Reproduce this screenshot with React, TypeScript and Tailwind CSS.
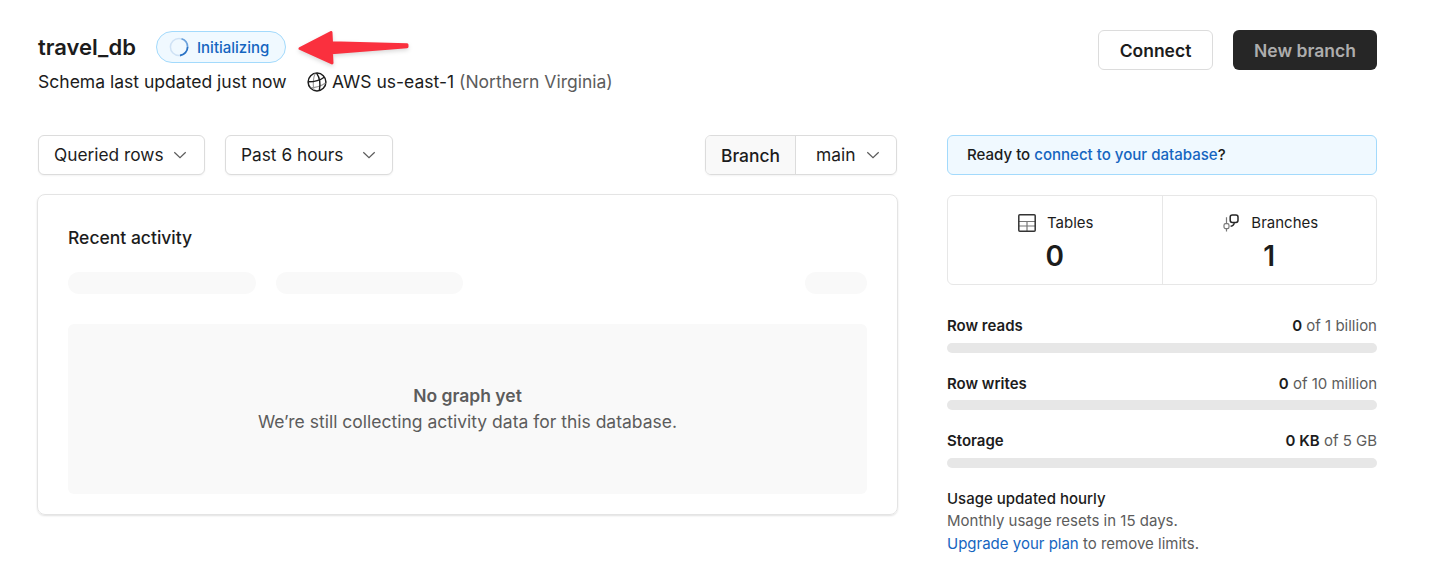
import type { ReactNode } from "react";

function Spinner() {
  return (
    <svg width="20" height="20" viewBox="0 0 20 20" fill="none" className="shrink-0">
      <circle cx="10" cy="10" r="8.6" stroke="#cfe2f5" strokeWidth="1.5" />
      <path d="M12.5 1.8A8.6 8.6 0 0 1 18.6 10" stroke="#6ba2dc" strokeWidth="1.6" />
      <path d="M18.6 10A8.6 8.6 0 0 1 11 18.5" stroke="#2a73c5" strokeWidth="1.8" />
    </svg>
  );
}

function Arrow() {
  return (
    <svg width="114" height="40" viewBox="0 0 114 40" className="shrink-0 overflow-visible drop-shadow-[0_2px_2px_rgba(0,0,0,0.15)]">
      <path
        d="M3 19.5L34 3.5L34.5 13.8L110 15.7V17.8L34.5 23.8L35 34Z"
        fill="#fa303e"
        stroke="#fa303e"
        strokeWidth="3"
        strokeLinejoin="round"
      />
    </svg>
  );
}

function Globe() {
  return (
    <svg width="20" height="20" viewBox="0 0 20 20" fill="none" className="shrink-0">
      <circle cx="10" cy="10" r="8.9" stroke="#1c1c1c" strokeWidth="1.5" />
      <path d="M8.2 1.4C6 6 5.8 11.5 6.8 18.2M3.6 15.8C8.5 15.7 14 14.2 18.5 11" stroke="#9a9a9a" strokeWidth="1.1" />
      <path d="M1.4 9.8C6.5 9.8 13 8.4 17.2 5.2" stroke="#1c1c1c" strokeWidth="1.4" />
      <path d="M9.6 1.2C12.6 5.6 13.6 12 12.4 18.4" stroke="#1c1c1c" strokeWidth="1.4" />
    </svg>
  );
}

function TableIcon() {
  return (
    <svg width="18" height="18" viewBox="0 0 18 18" fill="none">
      <path d="M1 7.5H17M1 12H17M9 7.5V17" stroke="#777" strokeWidth="1.2" />
      <rect x="0.8" y="0.8" width="16.4" height="16.4" rx="1" stroke="#333" strokeWidth="1.5" />
    </svg>
  );
}

function BranchIcon() {
  return (
    <svg width="18" height="18" viewBox="0 0 18 18" fill="none">
      <path d="M4.5 3.2V9.5M4.5 14.8V17.5" stroke="#777" strokeWidth="1.2" />
      <rect x="2" y="9.6" width="5" height="5" rx="1.6" stroke="#777" strokeWidth="1.2" />
      <rect x="8.2" y="1" width="7.8" height="7.4" rx="2.1" stroke="#262626" strokeWidth="1.5" />
      <path d="M12.2 8.6C12.2 10.8 11 12 8.6 12.3" stroke="#262626" strokeWidth="1.4" />
    </svg>
  );
}

function Chevron() {
  return (
    <svg width="14" height="8" viewBox="0 0 14 8" fill="none" className="shrink-0">
      <path d="M1.3 1.2L7 6.6L12.7 1.2" stroke="#5c5c5c" strokeWidth="1.2" />
    </svg>
  );
}

function Select({ label, className }: { label: string; className: string }) {
  return (
    <button className={`flex h-10 items-center justify-between rounded-md border border-[#dcdcdc] bg-white pl-[15px] shadow-[0_1px_2px_rgba(0,0,0,0.05)] ${className}`}>
      <span className="text-[17.3px] leading-6">{label}</span>
      <Chevron />
    </button>
  );
}

function Stat({ icon, label, value }: { icon: ReactNode; label: string; value: string }) {
  return (
    <div className="flex flex-1 flex-col items-center pt-[17px]">
      <div className="flex h-5 items-center gap-[11px] pl-[2px] text-[15px]">
        {icon}
        <span>{label}</span>
      </div>
      <div className="mt-[5px] text-[28px] leading-9 font-semibold">{value}</div>
    </div>
  );
}

function Usage({ label, used, limit, barGap }: { label: string; used: string; limit: string; barGap: string }) {
  return (
    <div>
      <div className="flex h-5 items-center justify-between text-[15px]">
        <span className="font-semibold">{label}</span>
        <span className="text-[#5c5c5c]">
          <span className="font-semibold text-[#1c1c1c]">{used}</span> {limit}
        </span>
      </div>
      <div className={`h-[10px] rounded-full bg-[#e7e7e7] ${barGap}`} />
    </div>
  );
}

export default function App() {
  return (
    <main className="h-[580px] w-[1429px] overflow-hidden bg-white pt-[30px] pr-[52px] pl-[38px] font-['Inter',sans-serif] text-[#1c1c1c]">
      <header className="flex h-[105px] items-start justify-between">
        <div>
          <div className="flex h-[34px] items-center">
            <h1 className="w-[118px] text-[22px] font-semibold">travel_db</h1>
            <div className="flex h-8 w-[130px] items-center gap-2 rounded-full border border-[#a3dafc] bg-[#f0f9ff] pl-3 text-[15px] font-medium text-[#1565c0]">
              <Spinner />
              <span className="pt-[2px]">Initializing</span>
            </div>
            <div className="ml-[11px] h-9">
              <Arrow />
            </div>
          </div>
          <div className="mt-[6px] flex h-6 items-center text-[17.5px]">
            <span className="w-[269px] text-[17.55px] whitespace-nowrap">Schema last updated just now</span>
            <Globe />
            <span className="ml-[5px] whitespace-nowrap">
              AWS us-east-1 <span className="text-[#5c5c5c]">(Northern Virginia)</span>
            </span>
          </div>
        </div>
        <div className="flex gap-5 text-[17.5px] font-semibold">
          <button className="h-10 w-[115px] rounded-md border border-[#dcdcdc] pt-[2px]">Connect</button>
          <button className="h-10 w-[144px] rounded-md bg-[#262626] pt-[2px] text-[#adadad]">New branch</button>
        </div>
      </header>

      <div className="flex justify-between">
        <section className="w-[859px]">
          <div className="flex h-10 gap-5">
            <Select label="Queried rows" className="w-[167px] pr-[17px]" />
            <Select label="Past 6 hours" className="w-[168px] pr-4" />
            <div className="ml-auto flex w-[192px] overflow-hidden rounded-md border border-[#dcdcdc] text-[17.4px] shadow-[0_1px_2px_rgba(0,0,0,0.05)]">
              <div className="flex w-[90px] items-center justify-center border-r border-[#dcdcdc] bg-[#f9f9f9] pt-[2px] font-medium">Branch</div>
              <button className="flex flex-1 items-center justify-between pr-4 pl-5">
                <span>main</span>
                <Chevron />
              </button>
            </div>
          </div>

          <div className="mt-[19px] -mr-px -ml-px h-[321px] rounded-lg border border-[#e4e4e4] px-[30px] pt-[30px] shadow-[0_1px_2px_rgba(0,0,0,0.12)]">
            <h2 className="text-[17.5px] leading-[26px] font-medium">Recent activity</h2>
            <div className="mt-[21px] flex h-[22px] gap-5">
              <div className="w-[188px] rounded-full bg-[#f9f9f9]" />
              <div className="w-[187px] rounded-full bg-[#f9f9f9]" />
              <div className="ml-auto w-[62px] rounded-full bg-[#f9f9f9]" />
            </div>
            <div className="mt-[30px] flex h-[170px] flex-col items-center justify-center rounded-md bg-[#f9f9f9] text-[17.5px] leading-[26px] text-[#5c5c5c]">
              <div className="font-semibold">No graph yet</div>
              <div>We’re still collecting activity data for this database.</div>
            </div>
          </div>
        </section>

        <aside className="w-[430px]">
          <div className="flex h-10 items-center rounded-md border border-[#a3dafc] bg-[#f0f9ff] pl-[19px] text-[15.05px] font-medium whitespace-pre">
            Ready to <a className="text-[#1565c0]">connect to your database</a>?
          </div>
          <div className="mt-5 flex h-[90px] divide-x divide-[#e7e7e7] rounded-md border border-[#e7e7e7]">
            <Stat icon={<TableIcon />} label="Tables" value="0" />
            <Stat icon={<BranchIcon />} label="Branches" value="1" />
          </div>
          <div className="mt-[31px] flex flex-col gap-[21px]">
            <Usage label="Row reads" used="0" limit="of 1 billion" barGap="mt-[7px]" />
            <Usage label="Row writes" used="0" limit="of 10 million" barGap="mt-[6px]" />
            <Usage label="Storage" used="0 KB" limit="of 5 GB" barGap="mt-[7px]" />
          </div>
          <div className="mt-5 text-[15px] text-[#5c5c5c]">
            <p className="leading-[22px] font-medium text-[#1c1c1c]">Usage updated hourly</p>
            <p className="leading-[22px]">Monthly usage resets in 15 days.</p>
            <p className="leading-6">
              <a className="text-[#1565c0]">Upgrade your plan</a> to remove limits.
            </p>
          </div>
        </aside>
      </div>
    </main>
  );
}
